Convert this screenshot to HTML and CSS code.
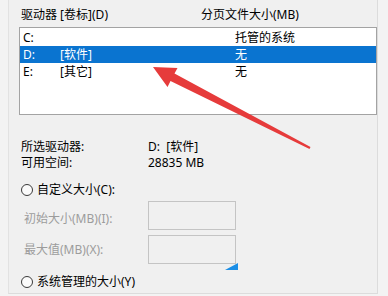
FILE: index.html
```html
<!DOCTYPE html>
<html lang="zh-CN">
<head>
<meta charset="utf-8">
<title>虚拟内存</title>
<link rel="stylesheet" href="styles.css">
</head>
<body>
<div class="panel">
  <div class="head">
    <span class="hc1">驱动器 [卷标](D)</span>
    <span class="hc2">分页文件大小(MB)</span>
  </div>
  <div class="list">
    <div class="row"><span class="drv">C:</span><span class="lbl"></span><span class="size">托管的系统</span></div>
    <div class="row sel"><span class="drv">D:</span><span class="lbl">[软件]</span><span class="size">无</span></div>
    <div class="row"><span class="drv">E:</span><span class="lbl">[其它]</span><span class="size">无</span></div>
  </div>
  <div class="info">
    <div class="kv"><span class="k">所选驱动器:</span><span class="v">D:&nbsp;&nbsp;[软件]</span></div>
    <div class="kv"><span class="k">可用空间:</span><span class="v">28835 MB</span></div>
  </div>
  <div class="radio-row first"><span class="radio"></span><span>自定义大小(C):</span></div>
  <div class="field f1"><span class="flabel">初始大小(MB)(I):</span><span class="input"></span></div>
  <div class="field f2"><span class="flabel">最大值(MB)(X):</span><span class="input"><span class="corner"></span></span></div>
  <div class="radio-row second"><span class="radio"></span><span>系统管理的大小(Y)</span></div>
</div>
<svg class="arrow" width="388" height="296" viewBox="0 0 388 296" xmlns="http://www.w3.org/2000/svg">
  <polygon points="153,67 177.5,68 174.5,73.5 310.5,147 309.5,149 170.5,81 167.5,87" fill="#e63b3b"/>
</svg>
</body>
</html>
```

FILE: styles.css
```css
html, body {
  margin: 0;
  padding: 0;
}
body {
  width: 388px;
  height: 296px;
  overflow: hidden;
  background: #f3f3f3;
  font-family: "Noto Sans", "Noto Sans CJK SC", sans-serif;
  font-size: 12px;
  color: #000000;
  position: relative;
}
.panel {
  margin-left: 8px;
  width: 370px;
  height: 294px;
  box-sizing: border-box;
  background: #f0f0f0;
  border-left: 1px solid #e2e2e2;
  border-right: 1px solid #dcdcdc;
  border-bottom: 1px solid #dcdcdc;
  padding-top: 7px;
}
.head {
  display: flex;
  height: 16px;
  line-height: 16px;
  white-space: nowrap;
}
.hc1 {
  width: 192px;
  padding-left: 12px;
  box-sizing: border-box;
}
.list {
  margin-top: 4px;
  margin-left: 10px;
  width: 358px;
  height: 88px;
  box-sizing: border-box;
  border: 1px solid #a3a3a3;
  background: #ffffff;
  padding-top: 1px;
}
.row {
  display: flex;
  height: 17px;
  line-height: 17px;
  padding-left: 3px;
  white-space: nowrap;
}
.row.sel {
  background: #0a74d0;
  color: #ffffff;
}
.drv {
  width: 37px;
}
.lbl {
  width: 175px;
}
.info {
  margin-top: 24px;
}
.kv {
  display: flex;
  height: 16px;
  line-height: 16px;
  padding-left: 12px;
  white-space: nowrap;
}
.k {
  width: 127px;
}
.radio-row {
  display: flex;
  align-items: center;
  height: 16px;
  line-height: 16px;
  padding-left: 12px;
  white-space: nowrap;
}
.radio-row.first {
  margin-top: 11px;
}
.radio-row.second {
  margin-top: 10px;
}
.radio {
  width: 12px;
  height: 12px;
  box-sizing: border-box;
  border: 1px solid #3a3a3a;
  border-radius: 50%;
  background: #fbfbfb;
  margin-right: 4px;
  flex: none;
}
.field {
  display: flex;
  align-items: flex-start;
  height: 29px;
  padding-left: 15px;
  white-space: nowrap;
}
.field.f1 {
  margin-top: 3px;
}
.field.f2 {
  margin-top: 5px;
}
.flabel {
  width: 124px;
  line-height: 16px;
  color: #9c9c9c;
}
.f1 .flabel {
  padding-top: 10px;
}
.f2 .flabel {
  padding-top: 7px;
}
.input {
  position: relative;
  width: 88px;
  height: 29px;
  box-sizing: border-box;
  border: 1px solid #c4c4c4;
}
.corner {
  position: absolute;
  left: 76px;
  top: 27px;
  width: 13px;
  height: 7px;
  background: #1a8ee6;
  clip-path: polygon(100% 0, 100% 100%, 0 100%);
}
.arrow {
  position: absolute;
  left: 0;
  top: 0;
  pointer-events: none;
}
```
